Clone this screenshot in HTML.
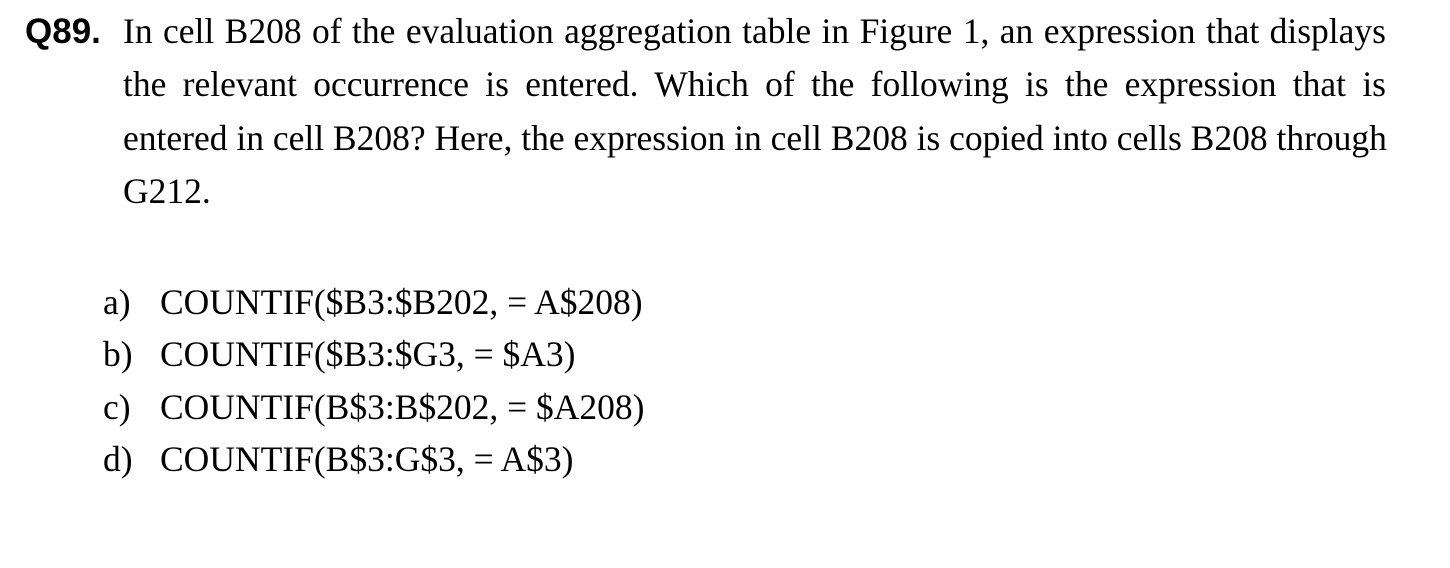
<!DOCTYPE html>
<html><head><style>
body{margin:0;width:1450px;height:568px;background:#fff;position:relative;font-family:"Liberation Serif",serif;color:#000;}
.q{position:absolute;left:25px;top:12px;font:bold 35px "Liberation Sans",sans-serif;}
.p{position:absolute;left:123px;top:5px;width:1263px;font-size:35.5px;line-height:53.3px;}
.p div{text-align:justify;text-align-last:justify;white-space:nowrap;}
.p div.l{text-align-last:left;}
.o{position:absolute;left:103px;font-size:35.5px;white-space:pre;}
.o span{position:absolute;left:57px;}
</style></head><body>
<div class="q">Q89.</div>
<div class="p">
<div>In cell B208 of the evaluation aggregation table in Figure 1, an expression that displays</div>
<div>the relevant occurrence is entered. Which of the following is the expression that is</div>
<div>entered in cell B208? Here, the expression in cell B208 is copied into cells B208 through</div>
<div class="l">G212.</div>
</div>
<div class="o" style="top:281px">a)<span>COUNTIF($B3:$B202, = A$208)</span></div>
<div class="o" style="top:333px">b)<span>COUNTIF($B3:$G3, = $A3)</span></div>
<div class="o" style="top:386px">c)<span>COUNTIF(B$3:B$202, = $A208)</span></div>
<div class="o" style="top:438px">d)<span>COUNTIF(B$3:G$3, = A$3)</span></div>
</body></html>
